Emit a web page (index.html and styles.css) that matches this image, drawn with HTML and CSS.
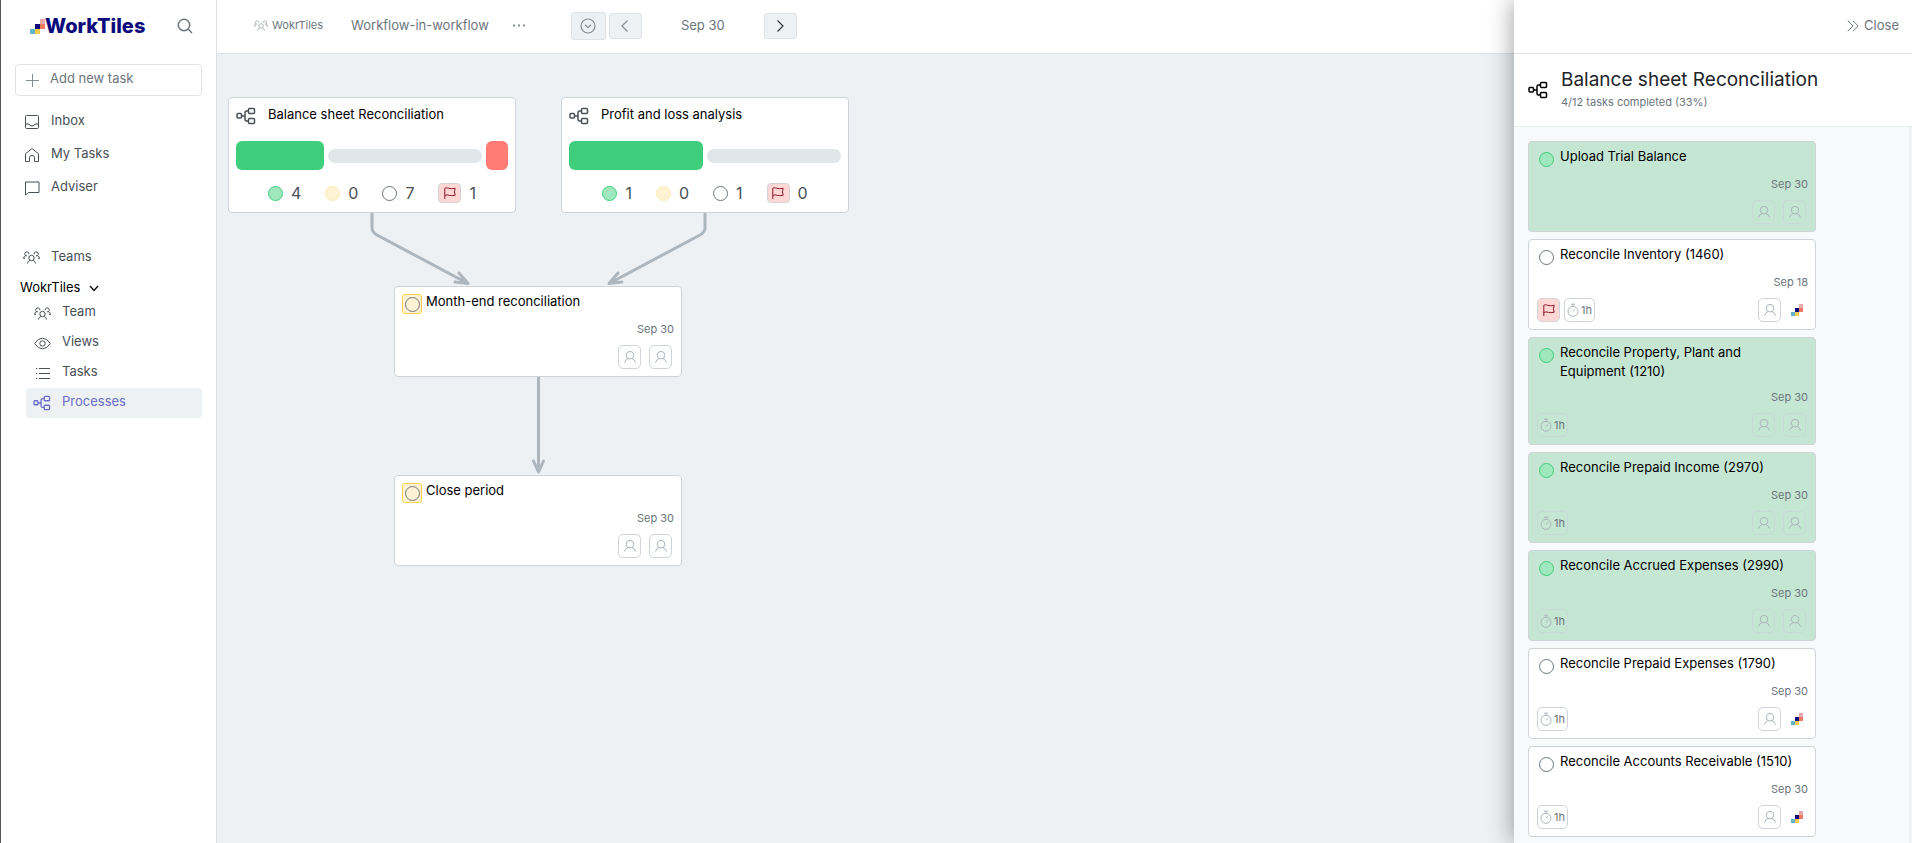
FILE: index.html
```html
<!DOCTYPE html>
<html lang="en">
<head>
<meta charset="utf-8">
<title>WorkTiles</title>
<link rel="stylesheet" href="styles.css">
</head>
<body>
<svg class="sprite" aria-hidden="true">
  <symbol id="team" viewBox="0 0 17 13"><path d="M5.9 3.2A2.1 2.1 0 1 0 2.6 4.7Q.7 5.2.5 7.4M.5 7.4H2M2.6 4.7L4 4.8M11.1 3.2A2.1 2.1 0 1 1 14.4 4.7Q16.3 5.2 16.5 7.4M16.5 7.4H15M14.4 4.7L13 4.8M4.4 12.5Q4.7 10.2 6.9 9.4M12.6 12.5Q12.3 10.2 10.1 9.4"/><circle cx="8.500" cy="7" r="2.700"/></symbol>
  <symbol id="flow" viewBox="0 0 20 18"><rect x="1" y="6.500" width="4.500" height="4.500" rx="1"/><rect x="12.500" y="1.500" width="6" height="5" rx="1"/><rect x="12.500" y="11.500" width="6" height="5" rx="1"/><path d="M5.500 9H9M12.500 4H10.500Q9 4 9 5.500V12.500Q9 14 10.500 14H12.500"/></symbol>
  <symbol id="person" viewBox="0 0 14 14"><circle cx="7" cy="5.200" r="3.800"/><path d="M1.500 12.500Q2.200 9.600 5 8.600M12.500 12.500Q11.800 9.600 9 8.600"/></symbol>
  <symbol id="timer" viewBox="0 0 12 14"><circle cx="6" cy="8.300" r="5"/><path d="M4 1.200H8M6 1.200V3.300M6 8.300L8.200 6.200"/></symbol>
  <symbol id="flag" viewBox="0 0 14 14"><path d="M1.800 13V2.200C4.500.8 6.300 3.800 12.200 2.200L11.400 5.800L12.200 9.200C7 10.800 5 7.800 1.800 9.400"/></symbol>
  <symbol id="tiles" viewBox="0 0 15 15"><path fill="#63b3cc" d="M0 10H5V15H0z"/><path fill="#f8cb4f" d="M5 10H10V15H5z"/><path fill="#0b0b7b" d="M5 5H10V10H5z"/><path fill="#ee7b60" d="M10 5H15V10H10z"/><path fill="#e8a9ab" d="M10 0H15V5H10z"/></symbol>
</svg>
<div class="app">
  <aside class="sidebar">
    <div class="brand-row">
      <a class="brand" href="#"><svg class="brand-mark" aria-hidden="true"><use href="#tiles"/></svg>WorkTiles</a>
      <button class="icon-button" aria-label="Search"><svg class="icon search-icon" viewBox="0 0 16 16"><circle cx="7" cy="7" r="5.700"/><path d="M11 11L15 15"/></svg></button>
    </div>
    <label class="add-task">
      <svg class="icon plus-icon" viewBox="0 0 13 13"><path d="M6.500 0V13M0 6.500H13"/></svg>
      <input type="text" placeholder="Add new task" aria-label="Add new task">
    </label>
    <nav class="nav">
      <a class="nav-link" href="#"><svg class="icon nav-icon" viewBox="0 0 16 16"><rect x="1.500" y="1.500" width="13" height="13" rx="1"/><path d="M1.500 10H5Q5.500 12 8 12T11 10H14.500"/></svg>Inbox</a>
      <a class="nav-link" href="#"><svg class="icon nav-icon" viewBox="0 0 16 16"><path d="M1.500 6.800L8 1.500L14.500 6.800V14.500H10.500V10.500Q10.500 8.500 8 8.500T5.500 10.500V14.500H1.500z"/></svg>My Tasks</a>
      <a class="nav-link" href="#"><svg class="icon nav-icon" viewBox="0 0 16 16"><path d="M1.500 2H15V12.500H4.500L1.500 15z"/></svg>Adviser</a>
      <a class="nav-link teams-link" href="#"><svg class="icon team-icon"><use href="#team"/></svg>Teams</a>
    </nav>
    <button class="group-toggle">WokrTiles <svg class="icon chevron" viewBox="0 0 10 7"><path d="M1 1L5 5.500L9 1"/></svg></button>
    <nav class="subnav">
      <a class="sub-link" href="#"><svg class="icon team-icon"><use href="#team"/></svg>Team</a>
      <a class="sub-link" href="#"><svg class="icon team-icon" viewBox="0 0 17 13"><path d="M.7 6.500Q4 1.200 8.500 1.200T16.300 6.500Q13 11.800 8.500 11.800T.7 6.500z"/><circle cx="8.500" cy="6.500" r="2.700"/></svg>Views</a>
      <a class="sub-link" href="#"><svg class="icon team-icon" viewBox="0 0 17 13"><path d="M5 1.500H16M5 6.500H16M5 11.500H16M2 1.500H3.300M2 6.500H3.300M2 11.500H3.300"/></svg>Tasks</a>
      <a class="sub-link active" href="#"><svg class="icon sub-flow"><use href="#flow"/></svg>Processes</a>
    </nav>
  </aside>

  <main class="main">
    <header class="topbar">
      <a class="crumb" href="#"><svg class="icon crumb-icon"><use href="#team"/></svg>WokrTiles</a>
      <span class="page-name">Workflow-in-workflow</span>
      <button class="icon-button more" aria-label="More"><svg class="dots" viewBox="0 0 12 3"><path d="M0 .5H2V2.500H0zM5 .5H7V2.500H5zM10 .5H12V2.500H10z"/></svg></button>
      <div class="period">
        <button class="tool tool-large" aria-label="Current period"><svg class="icon" viewBox="0 0 16 16"><circle cx="8" cy="8" r="7"/><path d="M5 6.800L8 9.600L11 6.800"/></svg></button>
        <button class="tool" aria-label="Previous period"><svg class="icon" viewBox="0 0 16 16"><path d="M10.500 2.500L5 8L10.500 13.500"/></svg></button>
        <span class="period-name">Sep 30</span>
        <button class="tool dark" aria-label="Next period"><svg class="icon" viewBox="0 0 16 16"><path d="M5.500 2.500L11 8L5.500 13.500"/></svg></button>
      </div>
    </header>
    <section class="canvas">
      <svg class="edges" aria-hidden="true">
        <path d="M155 159V174Q155 178 160 181L250 229M242 219L251 229.500L238 228"/>
        <path d="M488 159V174Q488 178 483 181L393 229M401 219L392 229.500L405 228"/>
        <path d="M321.500 323V417M316.500 407L321.500 418L326.500 407"/>
      </svg>
      <article class="card flow-card node-balance">
        <h2 class="flow-title"><svg class="icon flow-icon"><use href="#flow"/></svg>Balance sheet Reconciliation</h2>
        <div class="progress"><span class="bar done" style="flex-grow:4"></span><span class="bar open" style="flex-grow:7"></span><span class="bar late" style="flex-grow:1"></span></div>
        <div class="stats">
          <span class="stat"><i class="dot green"></i>4</span><span class="stat"><i class="dot yellow"></i>0</span><span class="stat"><i class="dot"></i>7</span><span class="stat"><i class="flag-chip"><svg class="icon"><use href="#flag"/></svg></i>1</span>
        </div>
      </article>
      <article class="card flow-card node-profit">
        <h2 class="flow-title"><svg class="icon flow-icon"><use href="#flow"/></svg>Profit and loss analysis</h2>
        <div class="progress"><span class="bar done" style="flex-grow:1"></span><span class="bar open" style="flex-grow:1"></span></div>
        <div class="stats">
          <span class="stat"><i class="dot green"></i>1</span><span class="stat"><i class="dot yellow"></i>0</span><span class="stat"><i class="dot"></i>1</span><span class="stat"><i class="flag-chip"><svg class="icon"><use href="#flag"/></svg></i>0</span>
        </div>
      </article>
      <article class="card task node-month">
        <div class="task-head"><button class="status waiting" aria-label="Set status"><i class="dot"></i></button><h3 class="task-title">Month-end reconciliation</h3></div>
        <time class="date">Sep 30</time>
        <div class="badges"><span class="people"><button class="badge" aria-label="Assignee"><svg class="icon"><use href="#person"/></svg></button><button class="badge" aria-label="Reviewer"><svg class="icon"><use href="#person"/></svg></button></span></div>
      </article>
      <article class="card task node-close">
        <div class="task-head"><button class="status waiting" aria-label="Set status"><i class="dot"></i></button><h3 class="task-title">Close period</h3></div>
        <time class="date">Sep 30</time>
        <div class="badges"><span class="people"><button class="badge" aria-label="Assignee"><svg class="icon"><use href="#person"/></svg></button><button class="badge" aria-label="Reviewer"><svg class="icon"><use href="#person"/></svg></button></span></div>
      </article>
    </section>
  </main>

  <aside class="panel">
    <header class="panel-top"><button class="close"><svg class="icon" viewBox="0 0 12 12"><path d="M.8.8L6 6L.8 11.200M6 .8L11.200 6L6 11.200"/></svg>Close</button></header>
    <div class="panel-head">
      <svg class="icon flow-icon"><use href="#flow"/></svg>
      <div><h1 class="panel-title">Balance sheet Reconciliation</h1><p class="panel-sub">4/12 tasks completed (33%)</p></div>
    </div>
    <div class="panel-list">
      <article class="card task complete">
        <div class="task-head"><button class="status" aria-label="Set status"><i class="dot green"></i></button><h3 class="task-title">Upload Trial Balance</h3></div>
        <time class="date">Sep 30</time>
        <div class="badges"><span class="people"><button class="badge" aria-label="Assignee"><svg class="icon"><use href="#person"/></svg></button><button class="badge" aria-label="Reviewer"><svg class="icon"><use href="#person"/></svg></button></span></div>
      </article>
      <article class="card task">
        <div class="task-head"><button class="status" aria-label="Set status"><i class="dot"></i></button><h3 class="task-title">Reconcile Inventory (1460)</h3></div>
        <time class="date">Sep 18</time>
        <div class="badges"><button class="badge flagged" aria-label="Flag"><svg class="icon"><use href="#flag"/></svg></button><button class="badge time"><svg class="icon"><use href="#timer"/></svg>1h</button><span class="people"><button class="badge" aria-label="Assignee"><svg class="icon"><use href="#person"/></svg></button><svg class="avatar" role="img" aria-label="Team"><use href="#tiles"/></svg></span></div>
      </article>
      <article class="card task complete">
        <div class="task-head"><button class="status" aria-label="Set status"><i class="dot green"></i></button><h3 class="task-title">Reconcile Property, Plant and Equipment (1210)</h3></div>
        <time class="date">Sep 30</time>
        <div class="badges"><button class="badge time"><svg class="icon"><use href="#timer"/></svg>1h</button><span class="people"><button class="badge" aria-label="Assignee"><svg class="icon"><use href="#person"/></svg></button><button class="badge" aria-label="Reviewer"><svg class="icon"><use href="#person"/></svg></button></span></div>
      </article>
      <article class="card task complete">
        <div class="task-head"><button class="status" aria-label="Set status"><i class="dot green"></i></button><h3 class="task-title">Reconcile Prepaid Income (2970)</h3></div>
        <time class="date">Sep 30</time>
        <div class="badges"><button class="badge time"><svg class="icon"><use href="#timer"/></svg>1h</button><span class="people"><button class="badge" aria-label="Assignee"><svg class="icon"><use href="#person"/></svg></button><button class="badge" aria-label="Reviewer"><svg class="icon"><use href="#person"/></svg></button></span></div>
      </article>
      <article class="card task complete">
        <div class="task-head"><button class="status" aria-label="Set status"><i class="dot green"></i></button><h3 class="task-title">Reconcile Accrued Expenses (2990)</h3></div>
        <time class="date">Sep 30</time>
        <div class="badges"><button class="badge time"><svg class="icon"><use href="#timer"/></svg>1h</button><span class="people"><button class="badge" aria-label="Assignee"><svg class="icon"><use href="#person"/></svg></button><button class="badge" aria-label="Reviewer"><svg class="icon"><use href="#person"/></svg></button></span></div>
      </article>
      <article class="card task">
        <div class="task-head"><button class="status" aria-label="Set status"><i class="dot"></i></button><h3 class="task-title">Reconcile Prepaid Expenses (1790)</h3></div>
        <time class="date">Sep 30</time>
        <div class="badges"><button class="badge time"><svg class="icon"><use href="#timer"/></svg>1h</button><span class="people"><button class="badge" aria-label="Assignee"><svg class="icon"><use href="#person"/></svg></button><svg class="avatar" role="img" aria-label="Team"><use href="#tiles"/></svg></span></div>
      </article>
      <article class="card task">
        <div class="task-head"><button class="status" aria-label="Set status"><i class="dot"></i></button><h3 class="task-title">Reconcile Accounts Receivable (1510)</h3></div>
        <time class="date">Sep 30</time>
        <div class="badges"><button class="badge time"><svg class="icon"><use href="#timer"/></svg>1h</button><span class="people"><button class="badge" aria-label="Assignee"><svg class="icon"><use href="#person"/></svg></button><svg class="avatar" role="img" aria-label="Team"><use href="#tiles"/></svg></span></div>
      </article>
    </div>
  </aside>
</div>
</body>
</html>
```

FILE: styles.css
```css
* { box-sizing: border-box; }
body { margin: 0; font-family: Inter, "Liberation Sans", sans-serif; font-size: 13px; color: #495057; }
button { font: inherit; color: inherit; background: none; border: 0; padding: 0; }
a { color: inherit; text-decoration: none; }
h1, h2, h3, p { margin: 0; font-weight: 400; }
.sprite { position: absolute; width: 0; height: 0; }
.icon { fill: none; stroke: currentColor; flex: none; }

.app { display: flex; height: 100vh; overflow: hidden; }

.sidebar { flex: none; width: 217px; background: #fff; border-left: 1px solid #55565a; border-right: 1px solid #dee2e6; padding: 0 14px; }
.brand-row { display: flex; align-items: center; justify-content: space-between; height: 52px; padding: 0 9px 0 15px; }
.brand { display: flex; align-items: center; font-size: 20px; font-weight: 800; color: #0b0b7b; }
.brand-mark { width: 15px; height: 15px; }
.icon-button { display: flex; }
.search-icon { width: 16px; height: 16px; color: #6c757d; stroke-width: 1.5; }
.add-task { display: flex; align-items: center; gap: 11px; height: 32px; margin-top: 12px; padding: 0 10px; border: 1px solid #dee2e6; border-radius: 4px; }
.plus-icon { width: 13px; height: 13px; color: #868e96; }
.add-task input { min-width: 0; flex: 1; border: 0; padding: 0 0 4px; outline: 0; background: none; font: inherit; color: #495057; }
.add-task input::placeholder { color: #6c757d; opacity: 1; }
.nav { padding-top: 8px; }
.nav-link { display: flex; align-items: center; gap: 11px; height: 33px; padding: 0 0 2px 9px; }
.nav-icon { width: 16px; height: 16px; margin-top: 4px; }
.team-icon { width: 17px; height: 13px; margin-top: 4px; }
.teams-link { margin-top: 37px; padding-left: 8px; }
.group-toggle { display: flex; align-items: center; gap: 9px; height: 25px; padding: 3px 0 0 5px; color: #000; }
.chevron { width: 10px; height: 7px; margin-top: 3px; stroke-width: 1.2; }
.subnav { padding-left: 11px; }
.sub-link { display: flex; align-items: center; gap: 11px; height: 30px; padding: 0 8px 4px; border-radius: 4px; }
.sub-link.active { background: #edf1f4; color: #6c6ccb; padding-left: 7px; padding-bottom: 5px; }
.sub-flow { width: 18px; height: 16px; margin-top: 5px; stroke-width: 1.5; }

.main { flex: 1; min-width: 0; display: flex; flex-direction: column; }
.topbar { display: flex; align-items: center; height: 54px; padding: 0 37px 4px; background: #fff; border-bottom: 1px solid #dee2e6; color: #6c757d; }
.crumb { display: flex; align-items: center; gap: 4px; font-size: 11px; }
.crumb-icon { width: 14px; height: 11px; margin-top: 2px; color: #9aa2aa; }
.page-name { margin-left: 28px; }
.more { margin-left: 24px; padding-top: 2px; }
.dots { width: 12px; height: 3px; fill: #868e96; }
.period { display: flex; align-items: center; gap: 3px; margin-left: 46px; }
.tool { display: flex; align-items: center; justify-content: center; width: 33px; height: 26px; margin-top: 2px; border: 1px solid #dee2e6; border-radius: 3px; background: #edf1f4; color: #868e96; }
.tool .icon { width: 16px; height: 16px; stroke-width: 1.2; }
.tool-large { width: 35px; height: 28px; }
.tool.dark { color: #343a40; }
.period-name { width: 116px; text-align: center; }
.canvas { position: relative; flex: 1; overflow: hidden; background: #edf1f4; }
.edges { position: absolute; inset: 0; width: 100%; height: 100%; fill: none; stroke: #adb5bd; stroke-width: 3; stroke-linecap: round; stroke-linejoin: round; }

.card { width: 288px; background: #fff; border: 1px solid #ced4da; border-radius: 4px; }
.canvas .card { position: absolute; }
.node-balance { left: 11px; top: 43px; }
.node-profit { left: 344px; top: 43px; }
.node-month { left: 177px; top: 232px; }
.node-close { left: 177px; top: 421px; }
.flow-card { padding: 6px 7px 8px; }
.flow-title { display: flex; align-items: center; gap: 12px; height: 20px; font-size: 13px; color: #000; }
.flow-icon { width: 20px; height: 18px; margin-top: 3px; color: #495057; stroke-width: 1.5; }
.progress { display: flex; align-items: center; gap: 4px; height: 29px; margin-top: 17px; }
.bar { flex-basis: 0; height: 29px; border-radius: 6px; }
.bar.done { background: #3fcf7c; }
.bar.open { height: 14px; border-radius: 7px; background: #e1e6ea; }
.bar.late { background: #ff7b73; }
.stats { display: flex; align-items: center; justify-content: center; gap: 24px; height: 22px; margin-top: 12px; font-size: 16px; line-height: 20px; }
.stat { display: flex; align-items: center; gap: 8px; }
.dot { display: block; width: 15px; height: 15px; border: 1px solid #6c757d; border-radius: 50%; }
.dot.green { border-color: #3fcf7c; background: #9fe7bd; }
.dot.yellow { border-color: #fdeab5; background: #fff3d4; }
.flag-chip { display: flex; align-items: center; justify-content: center; width: 23px; height: 20px; border: 1px solid #ced4da; border-radius: 4px; background: #ffd8d6; color: #8e1626; }
.flag-chip .icon { width: 14px; height: 14px; }

.task { padding: 5px 7px 7px; }
.task-head { display: flex; align-items: flex-start; gap: 4px; }
.status { display: flex; flex: none; align-items: center; justify-content: center; width: 20px; height: 20px; margin-top: 2px; border: 1px solid transparent; border-radius: 3px; }
.status.waiting { border-color: #ffd04f; background: #fff3d4; }
.task-title { flex: 1; min-height: 22px; padding: 0 8px 1px 0; font-size: 13px; line-height: 19px; color: #000; }
.date { display: block; margin-top: 7px; text-align: right; font-size: 11px; line-height: 16px; color: #6c757d; }
.badges { display: flex; align-items: center; gap: 4px; height: 24px; margin-top: 8px; padding: 0 2px 0 1px; }
.badge { display: flex; align-items: center; justify-content: center; width: 23px; height: 24px; border: 1px solid #ced4da; border-radius: 5px; color: #adb5bd; }
.badge .icon { width: 14px; height: 14px; }
.badge.flagged { background: #ffd8d6; color: #8e1626; }
.badge.time { gap: 2px; width: 31px; font-size: 11px; color: #6c757d; }
.badge.time .icon { width: 12px; height: 14px; color: #adb5bd; }
.people { display: flex; align-items: center; gap: 8px; margin-left: auto; }
.avatar { width: 12px; height: 12px; margin: 0 3px 0 2px; }
.complete { background: #c5e6d3; }
.complete .badge { border-color: #c9d9d9; }

.panel { position: relative; display: flex; flex-direction: column; flex: none; width: 398px; background: #f8f9fb; box-shadow: 0 0 24px rgba(0, 0, 0, .4); }
.panel-top { display: flex; flex: none; align-items: center; justify-content: flex-end; height: 54px; padding: 0 13px 4px; background: #fff; border-bottom: 1px solid #dee2e6; color: #6c757d; }
.close { display: flex; align-items: center; gap: 5px; }
.close .icon { width: 12px; height: 12px; margin-top: 3px; }
.panel-head { display: flex; flex: none; align-items: center; gap: 13px; height: 73px; padding: 0 14px; background: #fff; border-bottom: 1px solid #e9eef2; }
.panel-head .flow-icon { color: #000; margin-top: 0; }
.panel-head div { padding-bottom: 2px; }
.panel-title { font-size: 19px; line-height: 26px; color: #212529; }
.panel-sub { font-size: 11px; line-height: 18px; color: #6c757d; }
.panel-list { display: flex; flex: 1; flex-direction: column; gap: 7px; min-height: 0; overflow: hidden; padding: 14px; border-right: 3px solid #f1f2f4; }
.panel-list .card { flex: none; }
```
